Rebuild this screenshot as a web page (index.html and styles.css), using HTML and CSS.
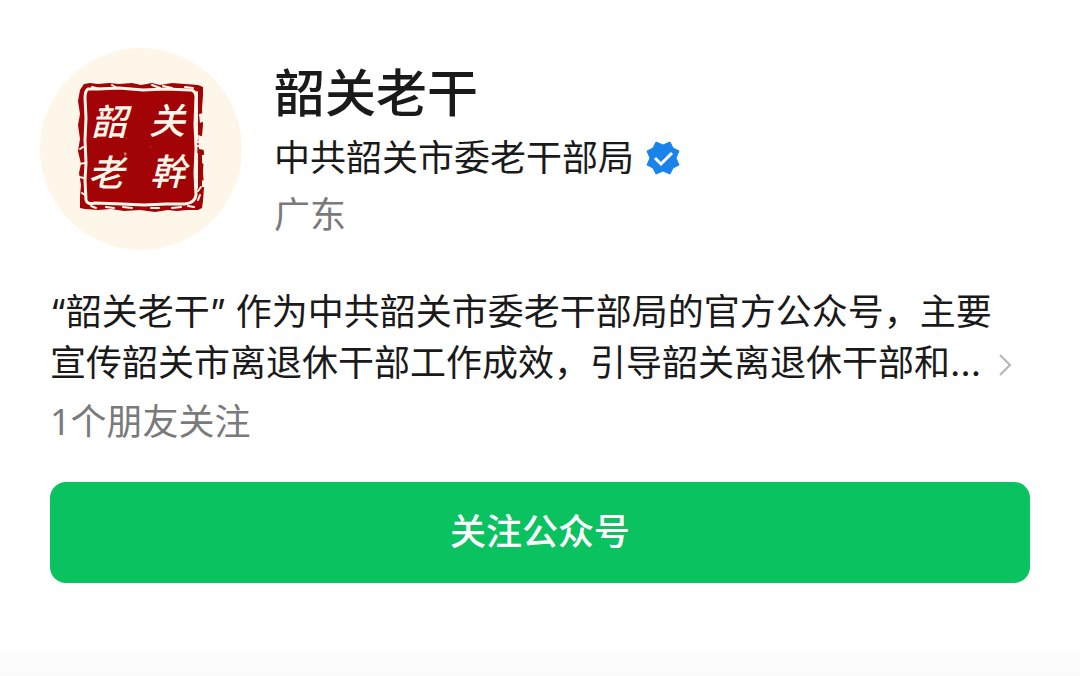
FILE: index.html
```html
<!DOCTYPE html>
<html lang="zh-CN">
<head>
<meta charset="utf-8">
<meta name="viewport" content="width=device-width, initial-scale=1">
<title>韶关老干</title>
<link rel="stylesheet" href="styles.css">
</head>
<body>
<main class="card">
  <header class="profile">
    <svg class="avatar" viewBox="0 0 202 202" role="img" aria-label="韶关老幹">
      <circle cx="101" cy="101" r="101" fill="#fef7e9"/>
      <path fill="#a20306" d="M44 36 L50 35 58 36 69 35 79 36 92 35 101 37 112 35 120 37 132 35 145 36 158 37 163 39 163 47 162 61 163 77 162 88 164 105 163 124 164 139 163 153 162 160 158 162 147 162 137 163 128 162 115 164 100 162 84 163 71 161 58 162 45 161 40 160 40 148 41 137 39 125 41 116 38 103 40 91 38 77 40 66 38 53 40 42Z"/>
      <path fill="none" stroke="#fef7e9" stroke-width="3" stroke-linejoin="round" d="M48 41 Q45 43 45 50 L46 70 45 92 46 115 45 132 46 152 Q47 157 55 155 L82 156 104 157 126 156 145 156 Q155 155 156 147 L155 125 156 100 155 76 156 48 Q155 42 150 42 L126 41 103 42 79 40 58 41Z"/>
      <path fill="none" stroke="#fef7e9" stroke-width="2" stroke-linecap="round" d="M39 116l6-1 M39 129l5 1 M40 101l3-2 M42 145l3 2 M52 39l8 2 M72 37l5 3 M112 37l8 3 M123 38l9 2 M145 39l8 1 M157 44v48 M158 94l6-1 M158 98h6 M157 106v34 M161 139l-3 4 M160 147l-2 5 M148 158l6 1 M132 160l9-1 M111 160l8 0 M83 159l9 1 M66 159l8 1 M51 158l5 2"/>
      <path fill="#fef7e9" d="M159 66l5-1v8l-4 2z M158 87l6 2v13l-5-1z M162 107h2v9l-2-1z M162 132l2 1v6h-2z"/>
      <path fill="#df6957" d="M84 104l3 1-1 3-2-1z M86 89l1 1-1 1z M109 98l4 2-3-1z"/>
      <g class="seal-text">
        <text x="51" y="87">韶</text>
        <text x="109" y="86">关</text>
        <text x="48" y="138">老</text>
        <text x="110" y="137">幹</text>
      </g>
    </svg>
    <div class="identity">
      <h1 class="name">韶关老干</h1>
      <p class="owner">
        <span>中共韶关市委老干部局</span>
        <svg class="verified" viewBox="0 0 34 34" role="img" aria-label="已认证">
          <path fill="#1983e9" stroke="#1983e9" stroke-width="1" stroke-linejoin="round" d="M17 4L24 1 27 7 33 10 30 17 33 24 27 27 24 33 17 30 10 33 7 27 1 24 4 17 1 10 7 7 10 1Z"/>
          <path fill="none" stroke="#fff" stroke-width="3" d="M9 17l6 6L26 12"/>
        </svg>
      </p>
      <p class="region">广东</p>
    </div>
  </header>
  <section class="details">
    <a class="intro" href="#intro">
      <span class="intro-text">“韶关老干” 作为中共韶关市委老干部局的官方公众号，主要宣传韶关市离退休干部工作成效，引导韶关离退休干部和…</span>
      <svg class="chevron" viewBox="0 0 14 24" aria-hidden="true">
        <path fill="none" stroke="#b5b5b5" stroke-width="2" d="M2 2l10 10L2 22"/>
      </svg>
    </a>
    <p class="friends">1个朋友关注</p>
    <button class="follow" type="button">关注公众号</button>
  </section>
</main>
<footer class="bottom-edge"></footer>
</body>
</html>
```
FILE: styles.css
```css
* {
  box-sizing: border-box;
}

body {
  display: flex;
  flex-direction: column;
  min-height: 100vh;
  margin: 0;
  background: #fff;
  color: #1a1a1a;
  font-family: Inter, "Noto Sans CJK SC", sans-serif;
  font-size: 36px;
  line-height: 51px;
}

h1,
p {
  margin: 0;
}

.card {
  flex: 1;
  padding: 48px 40px 40px;
}

.profile {
  display: flex;
  gap: 32px;
}

.avatar {
  flex: none;
  width: 202px;
  height: 202px;
}

.seal-text {
  fill: #fef7e9;
  font-family: "Noto Sans CJK SC", sans-serif;
  font-size: 36px;
  font-style: italic;
  font-weight: 500;
}

.identity {
  padding-top: 8px;
}

.name {
  font-family: "Noto Sans CJK SC", sans-serif;
  font-size: 51px;
  font-weight: 500;
  line-height: 68px;
}

.owner {
  display: flex;
  align-items: center;
  gap: 12px;
  padding-top: 4px;
  line-height: 60px;
}

.verified {
  width: 34px;
  height: 34px;
}

.region,
.friends {
  color: #7a7a7a;
}

.region {
  padding-top: 2px;
}

.details {
  padding: 37px 10px 0;
}

.intro {
  display: flex;
  align-items: flex-end;
  gap: 4px;
  padding-right: 18px;
  color: inherit;
  text-decoration: none;
}

.intro-text {
  flex: 1;
}

.chevron {
  flex: none;
  width: 14px;
  height: 24px;
  margin-bottom: 12px;
}

.friends {
  padding-top: 7px;
  font-family: "Noto Sans", "Noto Sans CJK SC", sans-serif;
}

.follow {
  display: block;
  width: 100%;
  margin-top: 35px;
  padding: 25px;
  border: 0;
  border-radius: 16px;
  background: #0ac260;
  color: #fff;
  font: inherit;
  font-weight: 500;
}

.bottom-edge {
  height: 26px;
  border-bottom: 4px solid #fafafa;
  background: #fcfcfc;
}
```
